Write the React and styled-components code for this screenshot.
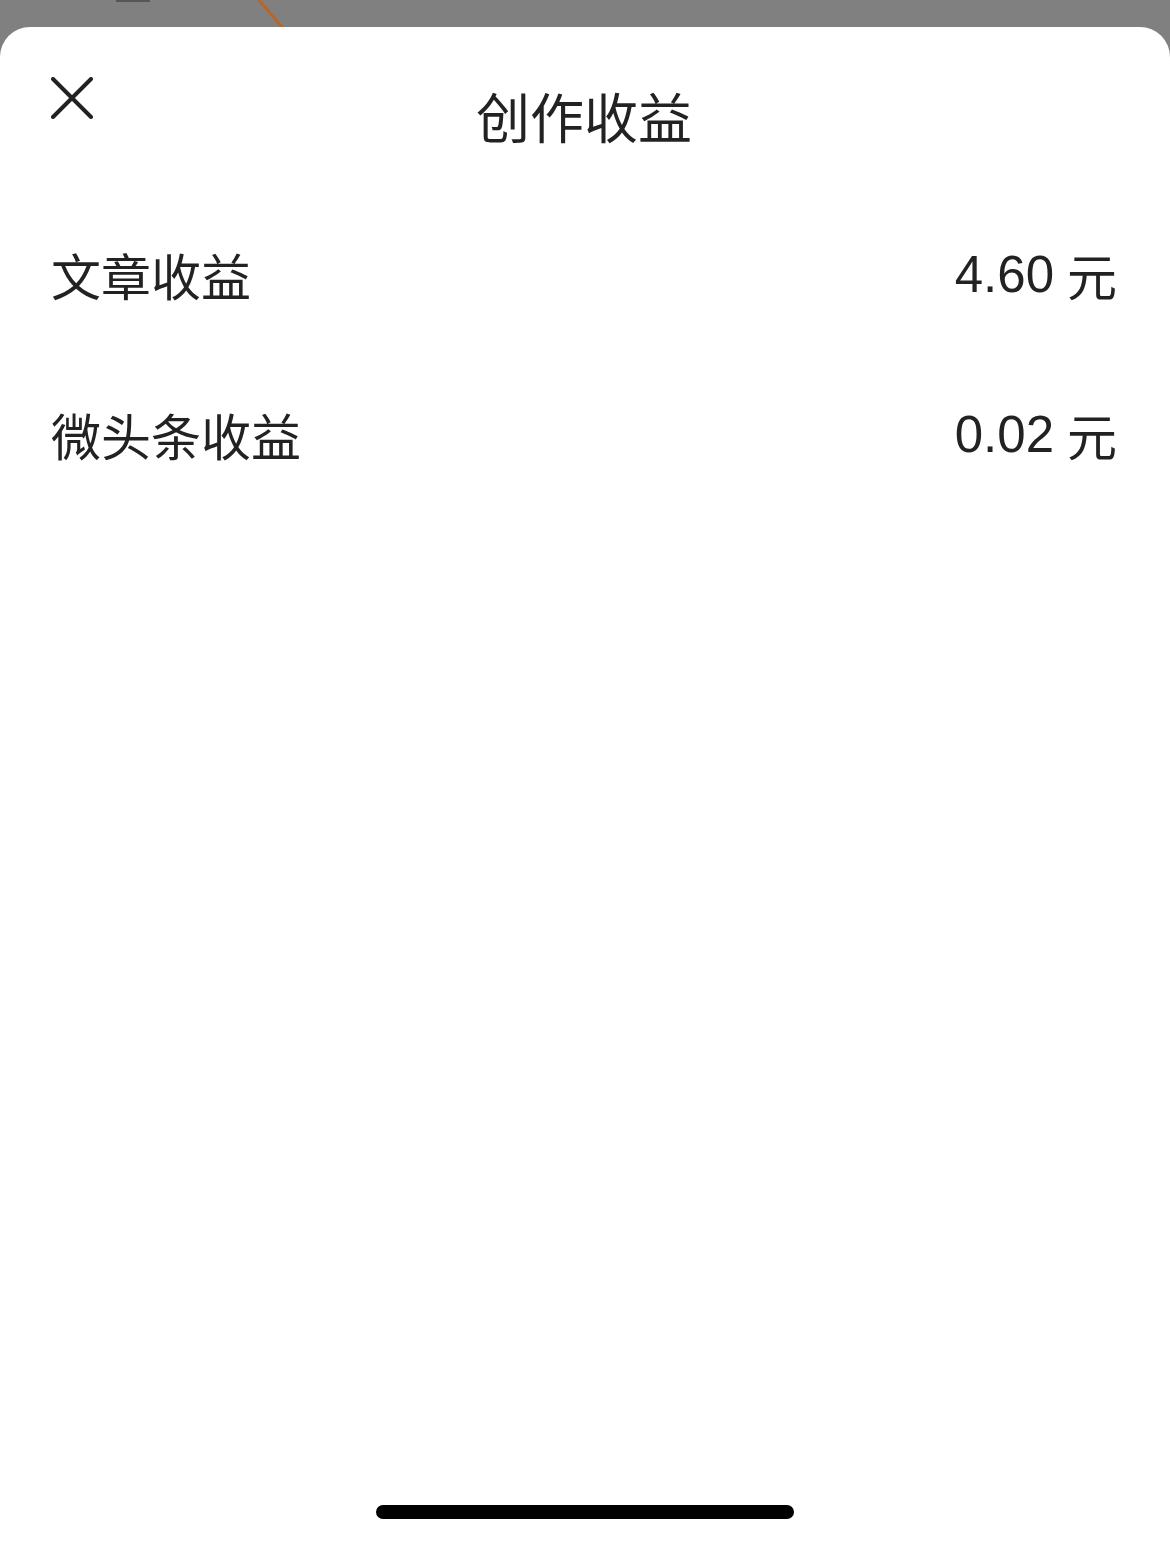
import React from "react";
import styled, { createGlobalStyle } from "styled-components";

const Global = createGlobalStyle`
  html, body { margin: 0; padding: 0; }
  body {
    background: #808080;
    font-family: "Noto Sans CJK SC", "Noto Sans", sans-serif;
    color: #222;
  }
  #root { min-height: 1543px; }
`;

const Page = styled.div`
  width: 1170px;
  height: 1543px;
  display: flex;
  flex-direction: column;
  overflow: hidden;
`;

const Backdrop = styled.div`
  height: 27px;
  flex: none;
  background: #808080;
  svg { display: block; }
`;

const Sheet = styled.div`
  flex: 1;
  background: #fff;
  border-radius: 30px 30px 0 0;
  display: flex;
  flex-direction: column;
  padding: 0 53px 0 51px;
`;

const Header = styled.div`
  height: 170px;
  position: relative;
  display: flex;
  justify-content: center;
  align-items: flex-start;
`;

const CloseButton = styled.button`
  position: absolute;
  left: 0;
  top: 50px;
  width: 42px;
  height: 42px;
  padding: 0;
  border: none;
  background: none;
  svg { display: block; }
`;

const Title = styled.h1`
  margin: 0;
  margin-top: 52px;
  font-size: 54px;
  line-height: 74px;
  font-weight: 400;
  color: #222;
`;

const Row = styled.div`
  height: 160px;
  box-sizing: border-box;
  padding-bottom: 6px;
  display: flex;
  align-items: center;
  justify-content: space-between;
`;

const Label = styled.span`
  font-size: 50px;
  line-height: 1;
  color: #222;
`;

const Value = styled.span`
  font-family: "Liberation Sans", "Noto Sans CJK SC", sans-serif;
  font-size: 51px;
  line-height: 1;
  color: #222;
  display: flex;
  align-items: center;
  gap: 13px;
`;

const Unit = styled.span`
  font-family: "Noto Sans CJK SC", sans-serif;
  font-size: 50px;
`;

const Spacer = styled.div`
  flex: 1;
`;

const HomeIndicator = styled.div`
  align-self: center;
  width: 418px;
  height: 14px;
  border-radius: 7px;
  background: #000;
  margin-bottom: 24px;
  margin-left: 2px;
`;

const items = [
  { label: "文章收益", value: "4.60" },
  { label: "微头条收益", value: "0.02" },
];

export default function App() {
  return (
    <>
      <Global />
      <Page>
        <Backdrop>
          <svg width="1170" height="27" viewBox="0 0 1170 27">
            <rect x="116" y="0" width="34" height="2" fill="#3a3a3a" opacity="0.6" />
            <line x1="258" y1="-1" x2="282" y2="27" stroke="#b8652a" strokeWidth="3" />
          </svg>
        </Backdrop>
        <Sheet>
          <Header>
            <CloseButton aria-label="关闭">
              <svg width="42" height="42" viewBox="0 0 42 42">
                <path d="M2 2 L40 40 M40 2 L2 40" stroke="#222" strokeWidth="4" strokeLinecap="round" />
              </svg>
            </CloseButton>
            <Title>创作收益</Title>
          </Header>
          {items.map((it) => (
            <Row key={it.label}>
              <Label>{it.label}</Label>
              <Value>
                {it.value}
                <Unit>元</Unit>
              </Value>
            </Row>
          ))}
          <Spacer />
          <HomeIndicator />
        </Sheet>
      </Page>
    </>
  );
}
